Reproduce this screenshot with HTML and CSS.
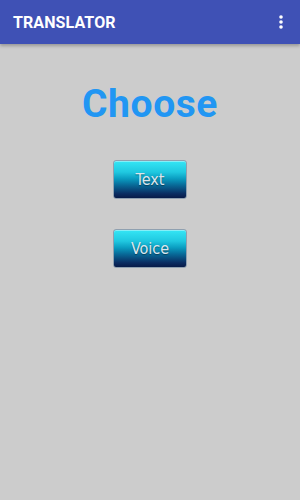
FILE: index.html
```html
<!DOCTYPE html>
<html lang="en">

<head>
    <meta charset="UTF-8">
    <meta name="viewport" content="width=device-width, initial-scale=1.0">
    <title>Translator</title>

    <link rel="stylesheet" href="styles.css">
</head>

<body>
    <div class="app-bar">
        <span class="app-title">TRANSLATOR</span>
        <svg class="menu-icon" width="4" height="14" viewBox="0 0 4 14">
            <circle cx="2" cy="2" r="1.8" fill="#fff"/>
            <circle cx="2" cy="7" r="1.8" fill="#fff"/>
            <circle cx="2" cy="12" r="1.8" fill="#fff"/>
        </svg>
    </div>

    <div class="content">
        <h1>Choose</h1>
        <button class="choice-button">Text</button>
        <button class="choice-button">Voice</button>
    </div>
</body>

</html>
```

FILE: styles.css
```css
body {
    margin: 0;
    background-color: #cccccc;
    font-family: Roboto, Arial, sans-serif;
    height: 500px;
}

.app-bar {
    height: 44px;
    background-color: #3f51b5;
    display: flex;
    align-items: center;
    justify-content: space-between;
    padding: 0 17px 0 13px;
    box-shadow: 0 2px 3px rgba(0, 0, 0, 0.25);
}

.app-title {
    color: white;
    font-weight: bold;
    font-size: 16px;
    letter-spacing: 0.1px;
}

.content {
    display: flex;
    flex-direction: column;
    align-items: center;
}

h1 {
    color: #2196f3;
    font-size: 39px;
    font-weight: bold;
    letter-spacing: 0.6px;
    margin: 37px 0 33px 0;
}

.choice-button {
    width: 74px;
    height: 39px;
    margin-bottom: 30px;
    border: 1px solid #8fa0b0;
    border-radius: 3px;
    color: #dde6ee;
    font-family: "DejaVu Sans Condensed", "DejaVu Sans", sans-serif;
    font-size: 16px;
    text-shadow: 0 1px 1px rgba(0, 0, 0, 0.4);
    background: linear-gradient(to bottom, #35e6f5 0%, #20c8e0 30%, #0a9cc0 48%, #086a98 65%, #0a2d62 88%, #071a48 100%);
    box-shadow: inset 0 1px 0 rgba(255, 255, 255, 0.4);
}
```
